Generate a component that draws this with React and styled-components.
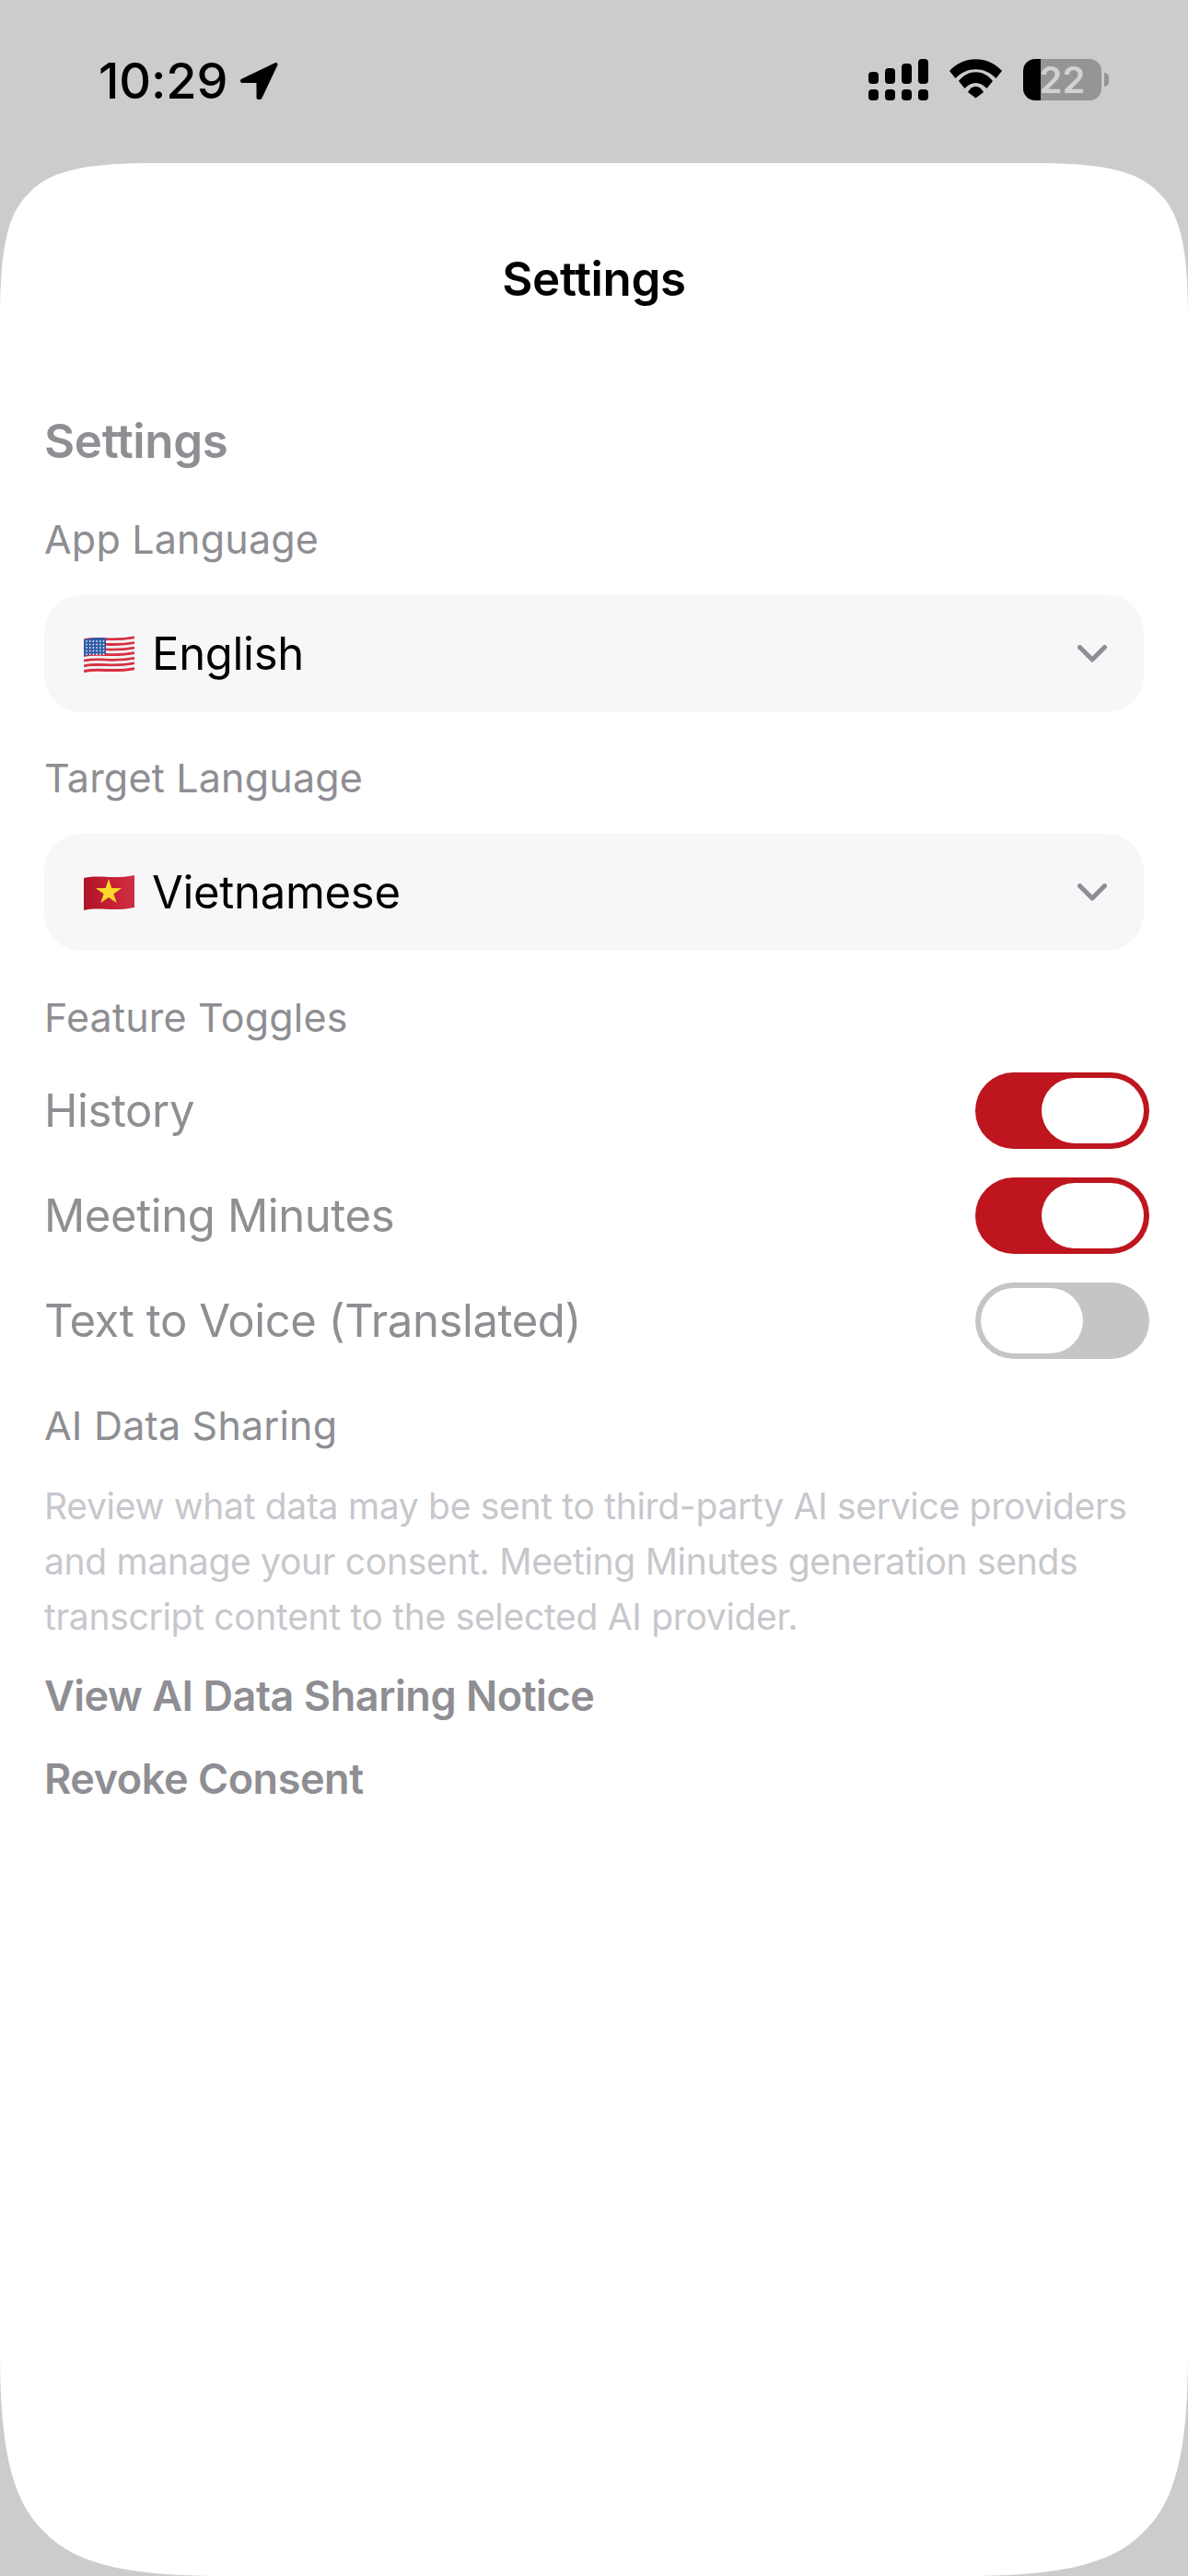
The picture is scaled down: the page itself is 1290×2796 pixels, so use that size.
import React from 'react';
import styled, { createGlobalStyle } from 'styled-components';

const GlobalStyle = createGlobalStyle`
  html, body {
    margin: 0;
    padding: 0;
    background: #cccccc;
  }
  body {
    font-family: Inter, "Noto Sans", sans-serif;
  }
`;

const Page = styled.div`
  width: 1290px;
  height: 2796px;
  display: flex;
  flex-direction: column;
  background: #cccccc;
  overflow: hidden;
`;

const StatusBar = styled.div`
  height: 177px;
  box-sizing: border-box;
  padding: 64px 86px 0 107px;
  display: flex;
  justify-content: space-between;
  align-items: flex-start;
`;

const TimeGroup = styled.div`
  display: flex;
  align-items: center;
  gap: 13px;
`;

const Time = styled.span`
  font-size: 54px;
  line-height: 47px;
  font-weight: 500;
  letter-spacing: -0.1px;
  color: #000;
`;

const StatusIcons = styled.div`
  display: flex;
  align-items: flex-start;
  gap: 23px;
`;

const Signal = styled.div`
  display: flex;
  gap: 7px;
  height: 45px;
`;

const SignalColumn = styled.div`
  width: 11px;
  display: flex;
  flex-direction: column;
  justify-content: flex-end;
  gap: 6px;
`;

const SignalBar = styled.div`
  height: ${p => p.$h}px;
  background: #000;
  border-radius: 4px;
`;

const Battery = styled.div`
  display: flex;
  align-items: center;
  gap: 3px;
  height: 45px;
`;

const BatteryBody = styled.div`
  width: 85px;
  height: 45px;
  border-radius: 13px;
  background: linear-gradient(to right, #000 0, #000 19px, #959595 19px);
  display: flex;
  align-items: center;
  justify-content: center;
  font-size: 40px;
  font-weight: 600;
  color: #d2d2d2;
`;

const BatteryNub = styled.div`
  width: 5px;
  height: 15px;
  background: #959595;
  border-radius: 0 8px 8px 0;
`;

const Sheet = styled.div`
  width: 1290px;
  height: 2619px;
  box-sizing: border-box;
  background: #fff;
  padding: 0 48px;
  clip-path: path('M0 170 C0 100 6 56 32 32 C56 6 100 0 170 0 L1120 0 C1190 0 1234 6 1258 32 C1284 56 1290 100 1290 170 L1290 2373 C1290 2469 1281 2534 1242 2571 C1205 2610 1140 2619 1044 2619 L246 2619 C150 2619 85 2610 48 2571 C9 2534 0 2469 0 2373 Z');
`;

const Header = styled.div`
  height: 250px;
  display: flex;
  align-items: center;
  justify-content: center;
  font-size: 51px;
  font-weight: 600;
  letter-spacing: -0.35px;
  color: #000;
`;

const SectionTitle = styled.div`
  margin-top: 2px;
  font-size: 51px;
  line-height: 100px;
  font-weight: 600;
  letter-spacing: -0.35px;
  color: #8e8e93;
`;

const Label = styled.div`
  margin-top: ${p => p.$top}px;
  font-size: 43px;
  line-height: 60px;
  letter-spacing: 0.2px;
  color: #8e8e93;
`;

const SelectBox = styled.div`
  margin-top: 31px;
  height: 127px;
  box-sizing: border-box;
  padding: 0 40px 0 43px;
  display: flex;
  align-items: center;
  background: #f7f7f9;
  border-radius: 40px;
`;

const FlagWrap = styled.span`
  display: flex;
  margin-right: 19px;
`;

const SelectText = styled.span`
  flex: 1;
  font-size: 49px;
  letter-spacing: -0.3px;
  color: #000;
`;

const ToggleList = styled.div`
  margin-top: 30px;
  display: flex;
  flex-direction: column;
  gap: 31px;
`;

const ToggleRow = styled.div`
  display: flex;
  align-items: center;
  justify-content: space-between;
  margin-right: -6px;
  font-size: 49px;
  letter-spacing: -0.4px;
  color: #8e8e93;
`;

const Track = styled.div`
  width: 189px;
  height: 83px;
  box-sizing: border-box;
  padding: 6px;
  border-radius: 42px;
  display: flex;
  justify-content: ${p => (p.$on ? 'flex-end' : 'flex-start')};
  background: ${p => (p.$on ? '#be151e' : '#c5c5c7')};
`;

const Knob = styled.div`
  width: 111px;
  height: 71px;
  background: #fff;
  border-radius: 36px;
`;

const Description = styled.p`
  margin: 28px 0 0;
  font-size: 39px;
  line-height: 60px;
  letter-spacing: -0.3px;
  color: #c7c7cc;
`;

const ActionLink = styled.div`
  margin-top: ${p => p.$top}px;
  font-size: 45px;
  line-height: 60px;
  font-weight: 600;
  letter-spacing: -0.45px;
  color: #8e8e93;
`;

const Chevron = () => (
  <svg width="32" height="19" viewBox="0 0 32 19" fill="none">
    <polyline points="2.5,2.5 16,16 29.5,2.5" stroke="#8e8e93" strokeWidth="5" strokeLinecap="round" strokeLinejoin="round" />
  </svg>
);

const LocationArrow = () => (
  <svg width="43" height="42" viewBox="0 0 43 42">
    <path d="M3 20.5 L39.5 3 L22.5 39 L20.5 39 L20.5 21 L3 21 Z" fill="#000" stroke="#000" strokeWidth="4" strokeLinejoin="round" />
  </svg>
);

const Wifi = () => (
  <svg width="57" height="43" viewBox="0 0 57 43" fill="#000">
    <path d="M0 13 C15 -4 42 -4 57 13 L50.5 21 C38 8 19 8 6.5 21 Z" />
    <path d="M10 24 C20 11 37 11 47 24 L40.5 32 C33 24 24 24 16.5 32 Z" />
    <path d="M20 36 C25 27.5 32 27.5 37 36 L28.5 42.5 Z" />
  </svg>
);

const stripeRows = Array.from({ length: 13 }, (_, i) => i);
const cantonDots = [];
for (let r = 0; r < 5; r++) {
  for (let c = 0; c < 6; c++) {
    cantonDots.push([3 + c * 3.7, 6 + r * 3.5]);
  }
}

const FlagUS = () => (
  <svg width="55" height="40" viewBox="0 0 55 40">
    {stripeRows.map(i => {
      const y = 2 + i * 2.8;
      return (
        <path
          key={i}
          d={`M0 ${y + 3} C18 ${y - 1} 30 ${y + 5} 55 ${y}`}
          fill="none"
          strokeWidth="3"
          stroke={i % 2 === 0 ? '#d8303f' : '#eef1f5'}
        />
      );
    })}
    <path d="M0 4 C9 2 17 2 24 2.5 V20 C17 20 9 20 0 22 Z" fill="#2c5aa6" />
    {cantonDots.map(([x, y]) => (
      <circle key={`${x}-${y}`} cx={x} cy={y} r="0.9" fill="#dfe7f4" />
    ))}
  </svg>
);

const FlagVN = () => (
  <svg width="55" height="40" viewBox="0 0 55 40">
    <defs>
      <linearGradient id="vn-red" x1="0" y1="0" x2="1" y2="0">
        <stop offset="0" stopColor="#b01428" />
        <stop offset="0.5" stopColor="#c41f34" />
        <stop offset="1" stopColor="#d02f43" />
      </linearGradient>
    </defs>
    <path d="M0 4 C18 0 30 6 55 1 V36 C30 41 18 35 0 39 Z" fill="url(#vn-red)" />
    <polygon
      points="27,5 30.3,15 41,15 32.4,21.2 35.7,31 27,25 18.3,31 21.6,21.2 13,15 23.7,15"
      fill="#fcd82c"
    />
  </svg>
);

const LanguageSelect = ({ flag, name }) => (
  <SelectBox>
    <FlagWrap>{flag}</FlagWrap>
    <SelectText>{name}</SelectText>
    <Chevron />
  </SelectBox>
);

const toggles = [
  { name: 'History', on: true },
  { name: 'Meeting Minutes', on: true },
  { name: 'Text to Voice (Translated)', on: false },
];

const signalBars = [13, 17, 22, 27];

export default function App() {
  return (
    <Page>
      <GlobalStyle />
      <StatusBar>
        <TimeGroup>
          <Time>10:29</Time>
          <LocationArrow />
        </TimeGroup>
        <StatusIcons>
          <Signal>
            {signalBars.map(h => (
              <SignalColumn key={h}>
                <SignalBar $h={h} />
                <SignalBar $h={12} />
              </SignalColumn>
            ))}
          </Signal>
          <Wifi />
          <Battery>
            <BatteryBody>22</BatteryBody>
            <BatteryNub />
          </Battery>
        </StatusIcons>
      </StatusBar>
      <Sheet>
        <Header>Settings</Header>
        <SectionTitle>Settings</SectionTitle>
        <Label $top={26}>App Language</Label>
        <LanguageSelect flag={<FlagUS />} name="English" />
        <Label $top={41}>Target Language</Label>
        <LanguageSelect flag={<FlagVN />} name="Vietnamese" />
        <Label $top={42}>Feature Toggles</Label>
        <ToggleList>
          {toggles.map(t => (
            <ToggleRow key={t.name}>
              {t.name}
              <Track $on={t.on}>
                <Knob />
              </Track>
            </ToggleRow>
          ))}
        </ToggleList>
        <Label $top={42}>AI Data Sharing</Label>
        <Description>
          Review what data may be sent to third-party AI service providers and manage your consent. Meeting Minutes generation sends transcript content to the selected AI provider.
        </Description>
        <ActionLink $top={26}>View AI Data Sharing Notice</ActionLink>
        <ActionLink $top={30}>Revoke Consent</ActionLink>
      </Sheet>
    </Page>
  );
}
